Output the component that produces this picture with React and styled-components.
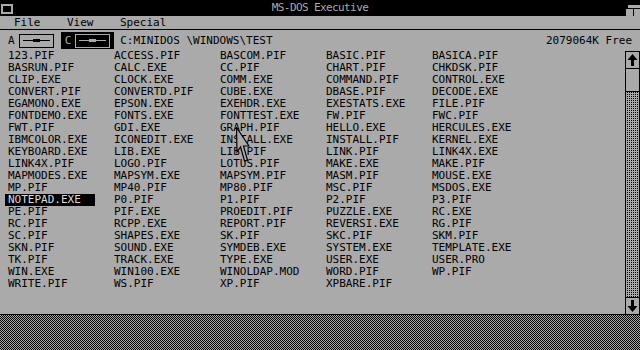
import React from 'react';
import styled, { createGlobalStyle } from 'styled-components';

const GRAY = '#aaaaaa';
const FONT = '"DejaVu Sans Mono", "Liberation Mono", monospace';

const files = [
  '123.PIF', 'ACCESS.PIF', 'BASCOM.PIF', 'BASIC.PIF', 'BASICA.PIF',
  'BASRUN.PIF', 'CALC.EXE', 'CC.PIF', 'CHART.PIF', 'CHKDSK.PIF',
  'CLIP.EXE', 'CLOCK.EXE', 'COMM.EXE', 'COMMAND.PIF', 'CONTROL.EXE',
  'CONVERT.PIF', 'CONVERTD.PIF', 'CUBE.EXE', 'DBASE.PIF', 'DECODE.EXE',
  'EGAMONO.EXE', 'EPSON.EXE', 'EXEHDR.EXE', 'EXESTATS.EXE', 'FILE.PIF',
  'FONTDEMO.EXE', 'FONTS.EXE', 'FONTTEST.EXE', 'FW.PIF', 'FWC.PIF',
  'FWT.PIF', 'GDI.EXE', 'GRAPH.PIF', 'HELLO.EXE', 'HERCULES.EXE',
  'IBMCOLOR.EXE', 'ICONEDIT.EXE', 'INSTALL.EXE', 'INSTALL.PIF', 'KERNEL.EXE',
  'KEYBOARD.EXE', 'LIB.EXE', 'LIB.PIF', 'LINK.PIF', 'LINK4X.EXE',
  'LINK4X.PIF', 'LOGO.PIF', 'LOTUS.PIF', 'MAKE.EXE', 'MAKE.PIF',
  'MAPMODES.EXE', 'MAPSYM.EXE', 'MAPSYM.PIF', 'MASM.PIF', 'MOUSE.EXE',
  'MP.PIF', 'MP40.PIF', 'MP80.PIF', 'MSC.PIF', 'MSDOS.EXE',
  'NOTEPAD.EXE', 'P0.PIF', 'P1.PIF', 'P2.PIF', 'P3.PIF',
  'PE.PIF', 'PIF.EXE', 'PROEDIT.PIF', 'PUZZLE.EXE', 'RC.EXE',
  'RC.PIF', 'RCPP.EXE', 'REPORT.PIF', 'REVERSI.EXE', 'RG.PIF',
  'SC.PIF', 'SHAPES.EXE', 'SK.PIF', 'SKC.PIF', 'SKM.PIF',
  'SKN.PIF', 'SOUND.EXE', 'SYMDEB.EXE', 'SYSTEM.EXE', 'TEMPLATE.EXE',
  'TK.PIF', 'TRACK.EXE', 'TYPE.EXE', 'USER.EXE', 'USER.PRO',
  'WIN.EXE', 'WIN100.EXE', 'WINOLDAP.MOD', 'WORD.PIF', 'WP.PIF',
  'WRITE.PIF', 'WS.PIF', 'XP.PIF', 'XPBARE.PIF',
];

const Global = createGlobalStyle`
  html, body { margin: 0; padding: 0; background: ${GRAY}; }
  body { font-family: ${FONT}; font-size: 11px; color: #000; }
`;

const Screen = styled.div`
  position: relative;
  width: 640px;
  height: 350px;
  display: flex;
  flex-direction: column;
  overflow: hidden;
`;

const Window = styled.div`
  box-sizing: border-box;
  height: 315px;
  display: flex;
  flex-direction: column;
  background: ${GRAY};
  border-bottom: 1px solid #000;
`;

const TitleBar = styled.div`
  height: 16px;
  background: #000;
  display: grid;
  grid-template-columns: 24px 1fr 24px;
  align-items: center;
`;

const SystemBox = styled.div`
  box-sizing: border-box;
  width: 12px;
  height: 10px;
  margin: 1px 0 0 1px;
  border: 2px solid ${GRAY};
  background: #000;
`;

const Title = styled.div`
  text-align: center;
  color: ${GRAY};
  line-height: 16px;
  letter-spacing: -0.6px;
`;

const SizeIcon = styled.svg`
  justify-self: end;
  margin-top: 4px;
  display: block;
`;

const MenuBar = styled.div`
  box-sizing: border-box;
  height: 14px;
  border-bottom: 1px solid #000;
  display: flex;
  align-items: center;
  padding-left: 14px;
`;

const MenuItem = styled.span`
  min-width: 53px;
  line-height: 13px;
`;

const DriveBar = styled.div`
  height: 20px;
  display: flex;
  align-items: flex-start;
  padding: 2px 8px 0 4px;
  box-sizing: border-box;
  gap: 3px;
`;

const DriveButton = styled.div`
  height: 17px;
  display: flex;
  align-items: center;
  gap: 4px;
  padding: 0 4px;
  background: ${(p) => (p.$selected ? '#000' : 'transparent')};
  color: ${(p) => (p.$selected ? GRAY : '#000')};
`;

const DriveBox = styled.div`
  box-sizing: border-box;
  width: 35px;
  height: 14px;
  border: 1px solid ${(p) => (p.$selected ? GRAY : '#000')};
  display: flex;
  align-items: center;
  justify-content: center;
`;

const SlotLine = styled.div`
  width: 27px;
  height: 1px;
  background: ${(p) => (p.$selected ? GRAY : '#000')};
  display: flex;
  align-items: center;
  justify-content: center;
`;

const SlotBlock = styled.div`
  flex: none;
  width: 7px;
  height: 3px;
  background: ${(p) => (p.$selected ? GRAY : '#000')};
`;

const PathText = styled.span`
  margin-left: 3px;
  line-height: 17px;
`;

const FreeText = styled.span`
  margin-left: auto;
  line-height: 17px;
`;

const FileArea = styled.div`
  flex: 1;
  display: flex;
  min-height: 0;
`;

const FileGrid = styled.div`
  flex: 1;
  display: grid;
  grid-template-columns: repeat(5, 90px);
  grid-auto-rows: 12px;
  column-gap: 16px;
  align-content: start;
  padding-left: 5px;
`;

const FileItem = styled.div`
  padding-left: 3px;
  line-height: 12px;
  white-space: nowrap;
  background: ${(p) => (p.$selected ? '#000' : 'transparent')};
  color: ${(p) => (p.$selected ? '#dcdcdc' : '#000')};
`;

const Scrollbar = styled.div`
  box-sizing: border-box;
  width: 15px;
  margin-top: 1px;
  border: 1px solid #000;
  border-bottom: none;
  display: flex;
  flex-direction: column;
`;

const ArrowBox = styled.div`
  height: 16px;
  flex: none;
  display: flex;
  align-items: center;
  justify-content: center;
  border-bottom: ${(p) => (p.$bottom ? 'none' : '1px solid #000')};
  border-top: ${(p) => (p.$bottom ? '1px solid #000' : 'none')};
  background: ${GRAY};
`;

const Thumb = styled.div`
  height: 22px;
  flex: none;
  border-bottom: 1px solid #000;
  background: ${GRAY};
`;

const Track = styled.div`
  flex: 1;
  background-color: ${GRAY};
  background-image: repeating-conic-gradient(#000 0 25%, transparent 0 100%);
  background-size: 2px 2px;
`;

const Desktop = styled.div`
  flex: 1;
  background: repeating-conic-gradient(#000 0 25%, ${GRAY} 0 50%) 0 0 / 2px 2px;
`;

const Cursor = styled.svg`
  position: absolute;
  left: 236px;
  top: 127px;
  display: block;
`;

function Arrow({ down }) {
  return (
    <svg width="11" height="12" viewBox="0 0 11 12" style={down ? { transform: 'rotate(180deg)' } : undefined}>
      <path d="M5.5 0 L10.5 6 H7 V12 H4 V6 H0.5 Z" fill="#000" />
    </svg>
  );
}

function Drive({ letter, selected }) {
  return (
    <DriveButton $selected={selected}>
      <span>{letter}</span>
      <DriveBox $selected={selected}>
        <SlotLine $selected={selected}>
          <SlotBlock $selected={selected} />
        </SlotLine>
      </DriveBox>
    </DriveButton>
  );
}

export default function App() {
  return (
    <Screen>
      <Global />
      <Window>
        <TitleBar>
          <SystemBox />
          <Title>MS-DOS Executive</Title>
          <SizeIcon width="14" height="11" viewBox="0 0 14 11">
            <rect x="2" y="0" width="12" height="3" fill={GRAY} />
            <rect x="0" y="4" width="7" height="7" fill={GRAY} />
            <rect x="8" y="4" width="6" height="7" fill={GRAY} />
          </SizeIcon>
        </TitleBar>
        <MenuBar>
          <MenuItem>File</MenuItem>
          <MenuItem>View</MenuItem>
          <MenuItem>Special</MenuItem>
        </MenuBar>
        <DriveBar>
          <Drive letter="A" />
          <Drive letter="C" selected />
          <PathText>C:MINIDOS \WINDOWS\TEST</PathText>
          <FreeText>2079064K Free</FreeText>
        </DriveBar>
        <FileArea>
          <FileGrid>
            {files.map((f) => (
              <FileItem key={f} $selected={f === 'NOTEPAD.EXE'}>{f}</FileItem>
            ))}
          </FileGrid>
          <Scrollbar>
            <ArrowBox><Arrow /></ArrowBox>
            <Thumb />
            <Track />
            <ArrowBox $bottom><Arrow down /></ArrowBox>
          </Scrollbar>
        </FileArea>
      </Window>
      <Desktop />
      <Cursor width="14" height="36" viewBox="0 0 14 36">
        <path d="M0.5 0.5 L1 25 L4.5 20 L8.5 34 L11.5 33 L7.5 19 L13 19 Z" fill={GRAY} stroke="#000" strokeWidth="1.2" strokeLinejoin="miter" />
      </Cursor>
    </Screen>
  );
}
